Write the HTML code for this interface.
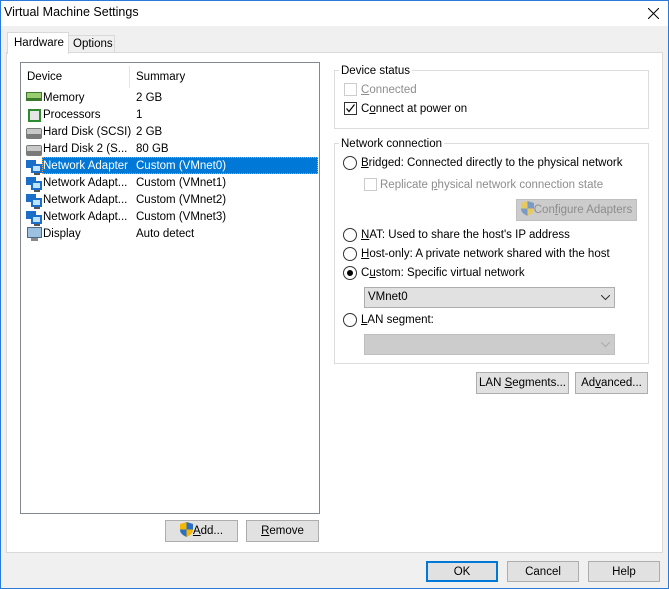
<!DOCTYPE html>
<html><head><meta charset="utf-8"><style>
*{box-sizing:border-box;margin:0;padding:0}
body{width:669px;height:589px;overflow:hidden;font-family:"Liberation Sans",sans-serif;font-size:11.5px;color:#000;background:#f0f0f0;position:relative}
.a{position:absolute;white-space:nowrap;line-height:17px}
.btn{position:absolute;background:#e1e1e1;border:1px solid #adadad;text-align:center;line-height:21px}
.grp{position:absolute;border:1px solid #dcdcdc}
.lbl{position:absolute;background:#fff;padding:0 2px;top:-8px;left:5px;line-height:17px}
.cb{position:absolute;width:13px;height:13px;border:1px solid #333;background:#fff}
.rb{position:absolute;width:14px;height:14px;border:1px solid #333;border-radius:50%;background:#fff}
.dis{color:#8d8d8d}
u{text-decoration:underline}
</style></head><body>
<div class="a" style="left:0;top:0;width:669px;height:26px;background:#fff"></div>
<div class="a" style="left:0;top:0;width:669px;height:589px;border:1px solid #2b79d8;z-index:5"></div>
<div class="a" style="left:4px;top:4px;font-size:12.5px">Virtual Machine Settings</div>
<svg class="a" style="left:648px;top:8px" width="11" height="11"><path d="M0 0L11 11M11 0L0 11" stroke="#000" stroke-width="1"/></svg>
<!-- tabs -->
<div class="a" style="left:68px;top:35px;width:47px;height:18px;border:1px solid #d9d9d9;border-bottom:none;background:#f0f0f0"></div>
<div class="a" style="left:73px;top:36px">Options</div>
<div class="a" style="left:6px;top:52px;width:657px;height:501px;background:#fff;border:1px solid #d9d9d9"></div>
<div class="a" style="left:7px;top:32px;width:62px;height:22px;background:#fff;border:1px solid #d9d9d9;border-bottom:none"></div>
<div class="a" style="left:14px;top:35px">Hardware</div>
<!-- list -->
<div class="a" style="left:20px;top:62px;width:300px;height:452px;border:1px solid #828790;background:#fff"></div>
<div class="a" style="left:129px;top:66px;width:1px;height:22px;background:#e5e5e5"></div>
<div class="a" style="left:27px;top:69px">Device</div>
<div class="a" style="left:136px;top:69px">Summary</div>
<div class="a" style="left:42px;top:157px;width:276px;height:17px;background:#0078d7;border:1px dotted #f3a04b"></div>
<div class="a" style="left:43px;top:90px;line-height:17px">Memory<br>Processors<br>Hard Disk (SCSI)<br>Hard Disk 2 (S...<br><span style="color:#fff">Network Adapter</span><br>Network Adapt...<br>Network Adapt...<br>Network Adapt...<br>Display</div>
<div class="a" style="left:136px;top:90px;line-height:17px">2 GB<br>1<br>2 GB<br>80 GB<br><span style="color:#fff">Custom (VMnet0)</span><br>Custom (VMnet1)<br>Custom (VMnet2)<br>Custom (VMnet3)<br>Auto detect</div>
<!-- icons -->
<svg class="a" style="left:26px;top:90px" width="17" height="153">
<rect x="0" y="2" width="16" height="9" fill="#3a7a2a"/><rect x="1" y="3" width="14" height="5" fill="#9ccc70"/>
<rect x="2" y="19" width="13" height="13" fill="#2e8b2e"/><rect x="4" y="21" width="9" height="9" fill="#e6e6e6"/>
<rect x="0" y="38" width="16" height="11" rx="2" fill="#7a7a7a"/><rect x="1" y="39" width="14" height="5" fill="#c8c8c8"/>
<rect x="0" y="55" width="16" height="11" rx="2" fill="#7a7a7a"/><rect x="1" y="56" width="14" height="5" fill="#c8c8c8"/>
<g id="n"><rect x="0" y="70" width="10" height="8" fill="#1b6fc8"/><rect x="5" y="74" width="11" height="9" fill="#1b6fc8"/><rect x="7" y="76" width="7" height="5" fill="#bfe3ff"/><rect x="8" y="83" width="6" height="2" fill="#555"/></g>
<use href="#n" y="17"/><use href="#n" y="34"/><use href="#n" y="51"/>
<rect x="1" y="137" width="15" height="11" fill="#4a6a8a"/><rect x="2" y="138" width="13" height="9" fill="#9cc0e0"/><rect x="5" y="148" width="7" height="3" fill="#888"/>
</svg>
<div class="btn" style="left:165px;top:520px;width:73px;height:22px;line-height:20px"><svg style="vertical-align:-3px" width="13" height="15"><path d="M6.5 0L13 2V8Q13 12 6.5 15Q0 12 0 8V2Z" fill="#f5b800"/><path d="M6.5 0L13 2V7.5H6.5ZM0 7.5H6.5V15Q0 12 0 8Z" fill="#2c6fc8"/></svg><u>A</u>dd...</div>
<div class="btn" style="left:246px;top:520px;width:73px;height:22px"><u>R</u>emove</div>
<!-- device status -->
<div class="grp" style="left:334px;top:70px;width:315px;height:59px"><span class="lbl" style="left:4px">Device status</span></div>
<div class="cb" style="left:344px;top:83px;border-color:#ccc"></div>
<div class="a dis" style="left:361px;top:82px"><u>C</u>onnected</div>
<div class="cb" style="left:344px;top:102px"><svg width="11" height="11" style="position:absolute;left:0;top:0"><path d="M1.5 5.5L4 8.5L9.5 1.5" stroke="#000" fill="none" stroke-width="1.2"/></svg></div>
<div class="a" style="left:361px;top:101px">C<u>o</u>nnect at power on</div>
<!-- network -->
<div class="grp" style="left:334px;top:143px;width:315px;height:221px"><span class="lbl" style="left:4px">Network connection</span></div>
<div class="rb" style="left:343px;top:156px"></div><div class="a" style="left:361px;top:155px"><u>B</u>ridged: Connected directly to the physical network</div>
<div class="cb" style="left:364px;top:178px;border-color:#ccc"></div><div class="a dis" style="left:380px;top:177px">Replicate <u>p</u>hysical network connection state</div>
<div class="btn dis" style="left:516px;top:199px;width:121px;height:22px;background:#ccc;border-color:#bfbfbf;line-height:20px"><svg style="vertical-align:-3px" width="13" height="15"><path d="M6.5 0L13 2V8Q13 12 6.5 15Q0 12 0 8V2Z" fill="#e8c860"/><path d="M6.5 0L13 2V7.5H6.5ZM0 7.5H6.5V15Q0 12 0 8Z" fill="#7a9ac8"/></svg>Con<u>f</u>igure Adapters</div>
<div class="rb" style="left:343px;top:228px"></div><div class="a" style="left:361px;top:227px"><u>N</u>AT: Used to share the host's IP address</div>
<div class="rb" style="left:343px;top:247px"></div><div class="a" style="left:361px;top:246px"><u>H</u>ost-only: A private network shared with the host</div>
<div class="rb" style="left:343px;top:266px"><div style="position:absolute;left:3px;top:3px;width:6px;height:6px;border-radius:50%;background:#000"></div></div><div class="a" style="left:361px;top:265px">C<u>u</u>stom: Specific virtual network</div>
<div class="a" style="left:364px;top:287px;width:251px;height:21px;background:#e1e1e1;border:1px solid #adadad"></div>
<div class="a" style="left:368px;top:289px">VMnet0</div>
<svg class="a" style="left:601px;top:295px" width="9" height="6"><path d="M0 0L4.5 4.5L9 0" stroke="#333" fill="none"/></svg>
<div class="rb" style="left:343px;top:313px"></div><div class="a" style="left:361px;top:312px"><u>L</u>AN segment:</div>
<div class="a" style="left:364px;top:334px;width:251px;height:21px;background:#ccc;border:1px solid #bfbfbf"></div>
<svg class="a" style="left:601px;top:342px" width="9" height="6"><path d="M0 0L4.5 4.5L9 0" stroke="#aaa" fill="none"/></svg>
<div class="btn" style="left:476px;top:372px;width:93px;height:22px">LAN <u>S</u>egments...</div>
<div class="btn" style="left:575px;top:372px;width:73px;height:22px">Ad<u>v</u>anced...</div>
<!-- bottom -->
<div class="btn" style="left:426px;top:561px;width:72px;height:21px;border:2px solid #0078d7;line-height:18px">OK</div>
<div class="btn" style="left:507px;top:561px;width:72px;height:21px;line-height:20px">Cancel</div>
<div class="btn" style="left:588px;top:561px;width:72px;height:21px;line-height:20px">Help</div>
</body></html>
